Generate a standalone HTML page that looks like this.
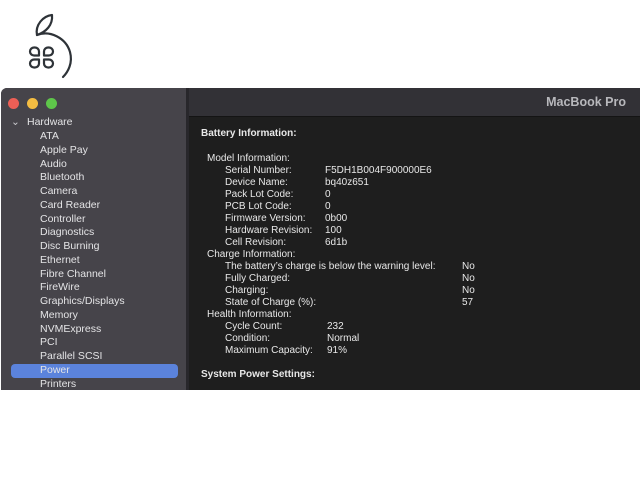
<!DOCTYPE html>
<html><head><style>
body{margin:0;width:640px;height:480px;background:#fff;position:relative;overflow:hidden;font-family:"Liberation Sans",sans-serif;}
#win{position:absolute;left:1px;top:88px;width:639px;height:302px;background:#1e1e1e;border-radius:6px 0 0 0;overflow:hidden;}
#side{position:absolute;left:0;top:0;width:185px;height:302px;background:#46444a;}
#div{position:absolute;left:185px;top:0;width:3px;height:302px;background:#28272b;}
#hdr{position:absolute;left:188px;top:0;right:0;height:28px;background:#323136;border-bottom:1px solid #141414;}
#hdr span{position:absolute;right:14px;top:7px;color:#b8b8bc;font-weight:bold;font-size:12.5px;}
.dot{position:absolute;top:10px;width:11px;height:11px;border-radius:50%;}
.s{position:absolute;left:39px;color:#e4e4e6;font-size:10.5px;}
.c{position:absolute;color:#e8e8e8;font-size:10px;white-space:nowrap;margin-top:2px;}
.b{font-weight:bold;}
</style></head><body>
<svg style="position:absolute;left:0;top:0" width="100" height="88" viewBox="0 0 100 88">
<g fill="none" stroke="#2e3338" stroke-width="2.2" stroke-linecap="round" stroke-linejoin="round">
<path d="M37 35 C35 25 43 16 52 15 C53 25 46 32 37 35 Z"/>
<path d="M37 35 C50 30 66 38 70 52 C73 63 68 72 63 77"/>
<g id="p"><path d="M39 55.5 H34 A4 4 0 0 1 30 51.5 A4 4 0 0 1 34 47.5 H35 A4 4 0 0 1 39 51.5 Z"/></g>
<use href="#p" transform="translate(83 0) scale(-1 1)"/>
<use href="#p" transform="translate(0 115) scale(1 -1)"/>
<use href="#p" transform="translate(83 115) scale(-1 -1)"/>
</g></svg>
<div id="win">
<div id="side">
<div class="dot" style="left:7px;background:#ec5f56"></div>
<div class="dot" style="left:26px;background:#f4bd42"></div>
<div class="dot" style="left:45px;background:#5ec64a"></div>
<div style="position:absolute;left:10px;top:28px;color:#c8c8cc;font-size:10.5px">⌄</div>
<div class="s" style="left:26px;top:28px">Hardware</div>
<div style="position:absolute;left:10px;top:276px;width:167px;height:14px;background:#5b83dc;border-radius:4px"></div>
<div class="s" style="top:42px">ATA</div>
<div class="s" style="top:56px">Apple Pay</div>
<div class="s" style="top:70px">Audio</div>
<div class="s" style="top:83px">Bluetooth</div>
<div class="s" style="top:97px">Camera</div>
<div class="s" style="top:111px">Card Reader</div>
<div class="s" style="top:125px">Controller</div>
<div class="s" style="top:138px">Diagnostics</div>
<div class="s" style="top:152px">Disc Burning</div>
<div class="s" style="top:166px">Ethernet</div>
<div class="s" style="top:180px">Fibre Channel</div>
<div class="s" style="top:193px">FireWire</div>
<div class="s" style="top:207px">Graphics/Displays</div>
<div class="s" style="top:221px">Memory</div>
<div class="s" style="top:235px">NVMExpress</div>
<div class="s" style="top:248px">PCI</div>
<div class="s" style="top:262px">Parallel SCSI</div>
<div class="s" style="top:276px">Power</div>
<div class="s" style="top:290px">Printers</div>
</div>
<div id="div"></div>
<div id="hdr"><span>MacBook Pro</span></div>
<div class="c b" style="left:200px;top:38px">Battery Information:</div>
<div class="c" style="left:206px;top:63px">Model Information:</div>
<div class="c" style="left:224px;top:75px">Serial Number:</div><div class="c" style="left:324px;top:75px">F5DH1B004F900000E6</div>
<div class="c" style="left:224px;top:87px">Device Name:</div><div class="c" style="left:324px;top:87px">bq40z651</div>
<div class="c" style="left:224px;top:99px">Pack Lot Code:</div><div class="c" style="left:324px;top:99px">0</div>
<div class="c" style="left:224px;top:111px">PCB Lot Code:</div><div class="c" style="left:324px;top:111px">0</div>
<div class="c" style="left:224px;top:123px">Firmware Version:</div><div class="c" style="left:324px;top:123px">0b00</div>
<div class="c" style="left:224px;top:135px">Hardware Revision:</div><div class="c" style="left:324px;top:135px">100</div>
<div class="c" style="left:224px;top:147px">Cell Revision:</div><div class="c" style="left:324px;top:147px">6d1b</div>
<div class="c" style="left:206px;top:159px">Charge Information:</div>
<div class="c" style="left:224px;top:171px">The battery’s charge is below the warning level:</div><div class="c" style="left:461px;top:171px">No</div>
<div class="c" style="left:224px;top:183px">Fully Charged:</div><div class="c" style="left:461px;top:183px">No</div>
<div class="c" style="left:224px;top:195px">Charging:</div><div class="c" style="left:461px;top:195px">No</div>
<div class="c" style="left:224px;top:207px">State of Charge (%):</div><div class="c" style="left:461px;top:207px">57</div>
<div class="c" style="left:206px;top:219px">Health Information:</div>
<div class="c" style="left:224px;top:231px">Cycle Count:</div><div class="c" style="left:326px;top:231px">232</div>
<div class="c" style="left:224px;top:243px">Condition:</div><div class="c" style="left:326px;top:243px">Normal</div>
<div class="c" style="left:224px;top:255px">Maximum Capacity:</div><div class="c" style="left:326px;top:255px">91%</div>
<div class="c b" style="left:200px;top:279px">System Power Settings:</div>
</div>
</body></html>
